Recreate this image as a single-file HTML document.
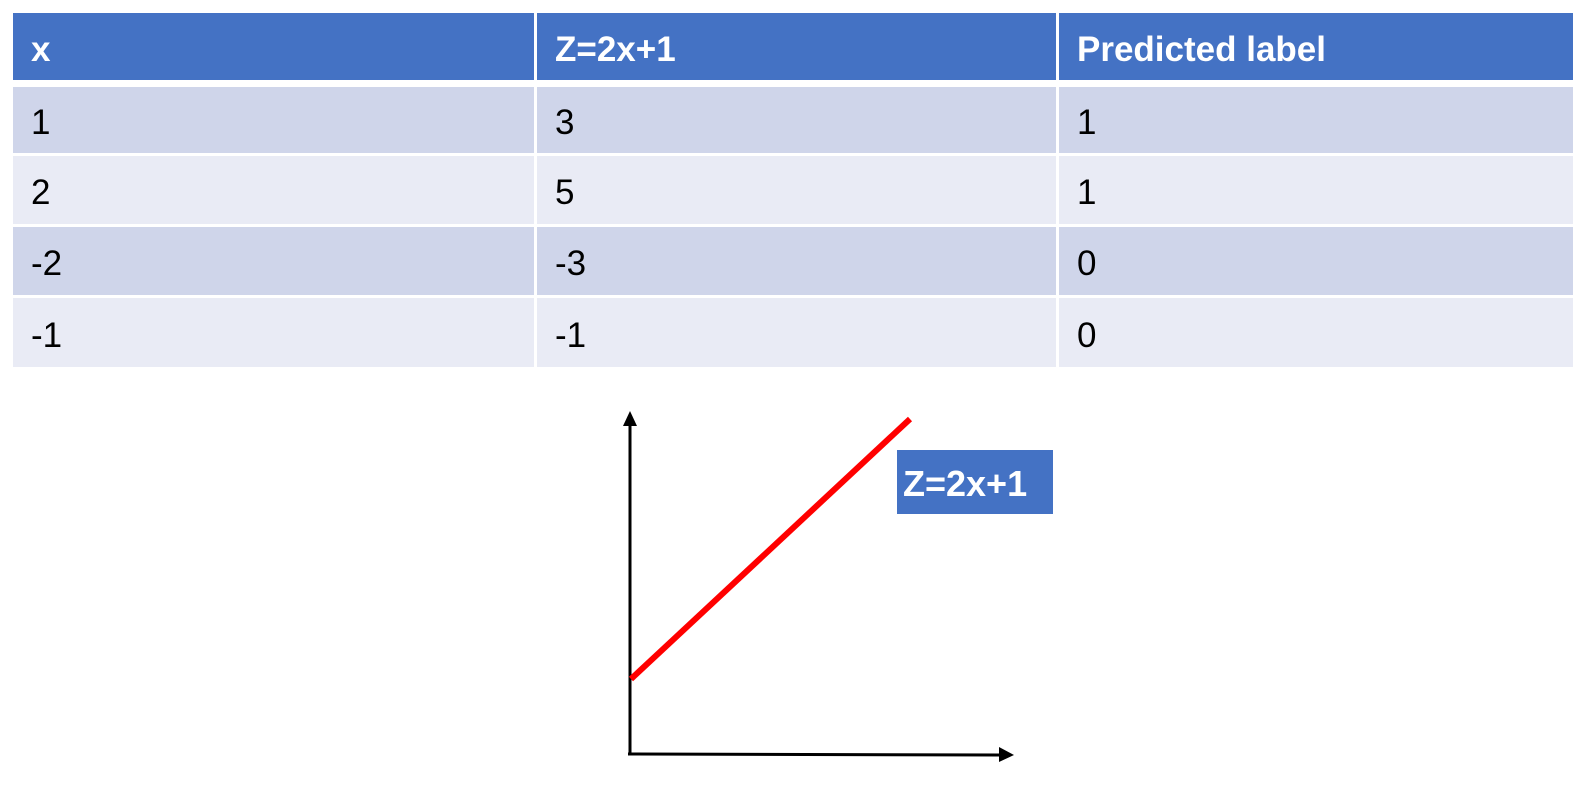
<!DOCTYPE html>
<html><head><style>
body{margin:0;width:1573px;height:791px;background:#fff;position:relative;overflow:hidden;font-family:"Liberation Sans",sans-serif}
.c{position:absolute;box-sizing:border-box;padding-left:18px;padding-top:6px;font-size:35px;display:flex;align-items:center;color:#000}
.h{background:#4472C4;color:#fff;font-weight:bold}
.o{background:#CFD5EA}.e{background:#E9EBF5}
</style></head><body>
<div class="c h" style="left:13px;top:13px;width:521px;height:67px">x</div>
<div class="c h" style="left:537px;top:13px;width:519px;height:67px">Z=2x+1</div>
<div class="c h" style="left:1059px;top:13px;width:514px;height:67px">Predicted label</div>

<div class="c o" style="left:13px;top:87px;width:521px;height:66px">1</div>
<div class="c o" style="left:537px;top:87px;width:519px;height:66px">3</div>
<div class="c o" style="left:1059px;top:87px;width:514px;height:66px">1</div>

<div class="c e" style="left:13px;top:156px;width:521px;height:68px">2</div>
<div class="c e" style="left:537px;top:156px;width:519px;height:68px">5</div>
<div class="c e" style="left:1059px;top:156px;width:514px;height:68px">1</div>

<div class="c o" style="left:13px;top:227px;width:521px;height:68px">-2</div>
<div class="c o" style="left:537px;top:227px;width:519px;height:68px">-3</div>
<div class="c o" style="left:1059px;top:227px;width:514px;height:68px">0</div>

<div class="c e" style="left:13px;top:298px;width:521px;height:69px">-1</div>
<div class="c e" style="left:537px;top:298px;width:519px;height:69px">-1</div>
<div class="c e" style="left:1059px;top:298px;width:514px;height:69px">0</div>

<svg style="position:absolute;left:0;top:0" width="1573" height="791">
<line x1="630" y1="422" x2="630" y2="755" stroke="#000" stroke-width="3"/>
<polygon points="623,426 637,426 630,411" fill="#000"/>
<line x1="628" y1="754" x2="1000" y2="755" stroke="#000" stroke-width="3"/>
<polygon points="999,747 999,762 1014,755" fill="#000"/>
<line x1="631" y1="679" x2="910" y2="419" stroke="#f00" stroke-width="6"/>
</svg>
<div style="position:absolute;left:897px;top:450px;width:156px;height:64px;background:#4472C4;color:#fff;font-weight:bold;font-size:36px;box-sizing:border-box;padding-left:6px;line-height:68px">Z=2x+1</div>
</body></html>
